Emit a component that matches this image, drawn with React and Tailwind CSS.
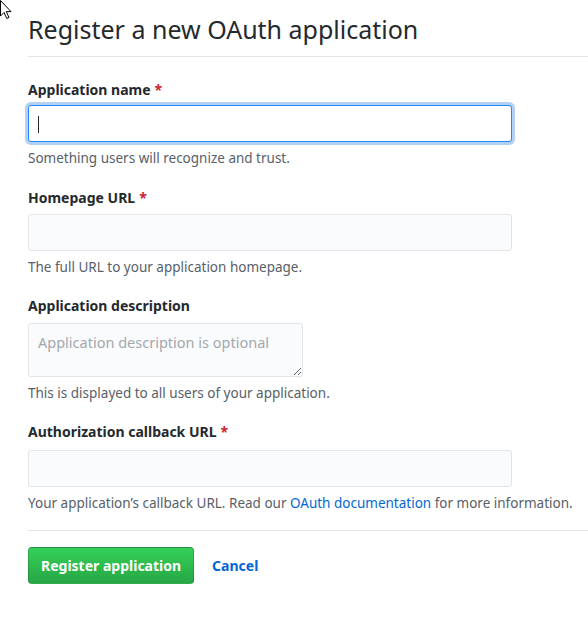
import { useState } from "react";

function Label({ children, required }) {
  return (
    <label className="block text-[14px] leading-[20px] font-bold text-[#24292e]">
      {children}
      {required && <span className="text-[#cb2431] ml-[4px]">*</span>}
    </label>
  );
}

function Note({ children }) {
  return <p className="mt-[7px] text-[13.5px] leading-[18px] text-[#586069]">{children}</p>;
}

export default function App() {
  const [name, setName] = useState("");

  return (
    <div className="relative min-h-[620px] bg-white pl-[28px] pt-[13px] font-['Noto_Sans','Liberation_Sans',sans-serif] text-[#24292e]">
      {/* mouse pointer */}
      <svg className="absolute left-0 top-0" width="14" height="20" viewBox="0 0 14 20">
        <path d="M0.5 0.5 L0.5 16 L4 12.5 L6.8 18.5 L9 17.5 L6.3 11.6 L11 11.6 Z" fill="#fff" stroke="#000" strokeWidth="1" strokeLinejoin="round" />
      </svg>

      <h2 className="text-[25px] leading-[32px] font-normal pb-[11px] border-b border-[#e1e4e8]">
        Register a new OAuth application
      </h2>

      <form className="pt-[23px]" onSubmit={(e) => e.preventDefault()}>
        <div className="mb-[21px]">
          <Label required>Application name</Label>
          <div className="relative mt-[5px] w-[484px]">
            <input
              value={name}
              onChange={(e) => setName(e.target.value)}
              className="block w-full h-[37px] px-[8px] text-[14px] bg-white border border-[#2188ff] rounded-[3px] outline-none shadow-[0_0_0_3px_rgba(3,102,214,0.3)]"
            />
            <span className="absolute left-[10px] top-[11px] h-[17px] w-px bg-[#24292e]" />
          </div>
          <Note>Something users will recognize and trust.</Note>
        </div>

        <div className="mb-[20px]">
          <Label required>Homepage URL</Label>
          <input className="block mt-[6px] w-[484px] h-[37px] px-[8px] text-[14px] bg-[#fafbfc] border border-[#e1e4e8] rounded-[3px] outline-none" />
          <Note>The full URL to your application homepage.</Note>
        </div>

        <div className="mb-[20px]">
          <Label>Application description</Label>
          <textarea
            placeholder="Application description is optional"
            className="block mt-[7px] w-[275px] h-[54px] px-[9px] pt-[8px] text-[14.5px] leading-[20px] bg-[#fafbfc] border border-[#e1e4e8] rounded-[3px] outline-none placeholder:text-[#a3a8ad]"
          />
          <Note>This is displayed to all users of your application.</Note>
        </div>

        <div className="pb-[18px] border-b border-[#e1e4e8]">
          <Label required>Authorization callback URL</Label>
          <input className="block mt-[8px] w-[484px] h-[37px] px-[8px] text-[14px] bg-[#fafbfc] border border-[#e1e4e8] rounded-[3px] outline-none" />
          <Note>
            Your application’s callback URL. Read our{" "}
            <a href="#" className="text-[#0366d6]">OAuth documentation</a> for more information.
          </Note>
        </div>

        <div className="flex items-center gap-[18px] pt-[16px]">
          <button
            type="submit"
            className="h-[37px] px-[12px] text-[14px] font-bold text-white rounded-[4px] border border-[rgba(27,31,35,0.2)] bg-gradient-to-b from-[#34d058] to-[#28a745]"
          >
            Register application
          </button>
          <a href="#" className="text-[14px] font-bold text-[#0366d6]">Cancel</a>
        </div>
      </form>
    </div>
  );
}
